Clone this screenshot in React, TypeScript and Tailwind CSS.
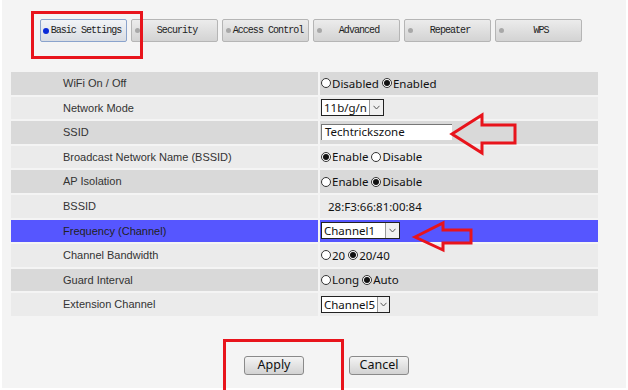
import React from "react"

const tabs = ["Basic Settings", "Security", "Access Control", "Advanced", "Repeater", "WPS"]

function Radio({ checked }: { checked?: boolean }) {
  return (
    <span className="inline-flex w-[10px] h-[10px] rounded-full border border-[#333] bg-white items-center justify-center mr-[1px]">
      {checked && <span className="w-[6px] h-[6px] rounded-full bg-[#111]" />}
    </span>
  )
}

function Select({ value, width }: { value: string; width: string }) {
  return (
    <div className={`flex h-[17px] border border-[#222] bg-white ${width}`}>
      <span className="flex-1 px-[2px] leading-[15px]">{value}</span>
      <span className="w-[14px] border-l border-[#999] bg-[#f0f0f0] flex items-center justify-center">
        <svg width="7" height="5" viewBox="0 0 7 5">
          <path d="M0.5 0.8 L3.5 4 L6.5 0.8" stroke="#555" strokeWidth="1" fill="none" />
        </svg>
      </span>
    </div>
  )
}

type Row = { label: string; value: React.ReactNode; tone: "dark" | "light" | "blue" }

const rows: Row[] = [
  {
    label: "WiFi On / Off",
    tone: "dark",
    value: (
      <span className="flex items-center">
        <Radio />Disabled&nbsp;<Radio checked />Enabled
      </span>
    ),
  },
  { label: "Network Mode", tone: "light", value: <Select value="11b/g/n" width="w-[63px]" /> },
  {
    label: "SSID",
    tone: "dark",
    value: (
      <div className="h-[16px] w-[131px] bg-white border-t border-l border-[#777] border-r-[#ddd] border-b-[#ddd] px-[3px] leading-[14px]">
        Techtrickszone
      </div>
    ),
  },
  {
    label: "Broadcast Network Name (BSSID)",
    tone: "light",
    value: (
      <span className="flex items-center">
        <Radio checked />Enable&nbsp;<Radio />Disable
      </span>
    ),
  },
  {
    label: "AP Isolation",
    tone: "dark",
    value: (
      <span className="flex items-center">
        <Radio />Enable&nbsp;<Radio checked />Disable
      </span>
    ),
  },
  { label: "BSSID", tone: "light", value: <span className="pl-[7px]">28:F3:66:81:00:84</span> },
  { label: "Frequency (Channel)", tone: "blue", value: <Select value="Channel1" width="w-[79px]" /> },
  {
    label: "Channel Bandwidth",
    tone: "light",
    value: (
      <span className="flex items-center">
        <Radio />20&nbsp;<Radio checked />20/40
      </span>
    ),
  },
  {
    label: "Guard Interval",
    tone: "dark",
    value: (
      <span className="flex items-center">
        <Radio />Long&nbsp;<Radio checked />Auto
      </span>
    ),
  },
  { label: "Extension Channel", tone: "light", value: <Select value="Channel5" width="w-[69px]" /> },
]

const toneClass = {
  dark: "bg-[#d9d9d9]",
  light: "bg-[#ebebeb]",
  blue: "bg-[#5656ff]",
}

export default function App() {
  return (
    <div className="w-[628px] h-[390px] bg-white overflow-hidden">
      <div className="relative ml-[2px] w-[624px] h-[388px] bg-[#f4f4f4]">
        <div className="flex gap-[4px] pt-[19px] pl-[38px]">
          {tabs.map((t, i) => (
            <div
              key={t}
              className={`relative w-[87px] h-[23px] rounded-[2px] border flex items-center justify-center pl-[5px] text-[10px] tracking-[-0.95px] text-[#222] ${
                i === 0
                  ? "border-[#8aa3cc] bg-gradient-to-b from-[#f2f4f7] to-[#d9dde3]"
                  : "border-[#b5b5b5] bg-gradient-to-b from-[#ececec] to-[#d3d3d3]"
              }`}
              style={{ fontFamily: '"Liberation Mono", monospace' }}
            >
              <span
                className={`absolute rounded-full ${
                  i === 0 ? "left-[2px] top-[8px] w-[6px] h-[6px] bg-[#0a2ad8]" : "left-[3px] top-[8px] w-[5px] h-[5px] bg-[#a8a8a8]"
                }`}
              />
              <span>{t}</span>
            </div>
          ))}
        </div>

        <div className="mt-[30px] ml-[9px] grid grid-cols-[307px_278px] gap-[2px]">
          {rows.map((r) => (
            <React.Fragment key={r.label}>
              <div
                className={`h-[22.6px] flex items-center pl-[52px] text-[11px] ${toneClass[r.tone]} ${
                  r.tone === "blue" ? "text-[#222]" : "text-[#333]"
                }`}
                style={{ fontFamily: '"Liberation Sans", Arial, sans-serif' }}
              >
                {r.label}
              </div>
              <div
                className={`h-[22.6px] flex items-center pl-[1px] text-[11.5px] text-[#111] ${toneClass[r.tone]}`}
                style={{ fontFamily: '"Noto Sans", sans-serif' }}
              >
                {r.value}
              </div>
            </React.Fragment>
          ))}
        </div>

        <div
          className="flex gap-[45px] pl-[242px] mt-[40px] text-[12.5px] text-[#111]"
          style={{ fontFamily: '"Noto Sans", sans-serif' }}
        >
          <div className="w-[60px] h-[19px] rounded-[3px] border border-[#8a8a8a] bg-gradient-to-b from-[#f4f4f4] to-[#d2d2d2] flex items-center justify-center">
            Apply
          </div>
          <div className="w-[60px] h-[19px] rounded-[3px] border border-[#8a8a8a] bg-gradient-to-b from-[#f4f4f4] to-[#d2d2d2] flex items-center justify-center">
            Cancel
          </div>
        </div>

        <div className="absolute left-[29px] top-[11px] w-[112px] h-[48px] border-[3px] border-[#e8141c] pointer-events-none" />
        <div className="absolute left-[221px] top-[339px] w-[121px] h-[60px] border-[3px] border-[#e8141c] pointer-events-none" />

        <svg className="absolute left-0 top-0 pointer-events-none" width="624" height="388" viewBox="2 0 624 388">
          <polygon
            points="452,134 482,115 482,125 515,125 515,143 482,143 482,153"
            fill="none"
            stroke="#e8141c"
            strokeWidth="3"
            strokeLinejoin="miter"
          />
          <polygon
            points="415,237 443,223 443,230 471,230 471,243 443,243 443,250"
            fill="none"
            stroke="#e8141c"
            strokeWidth="3"
            strokeLinejoin="miter"
          />
        </svg>
      </div>
    </div>
  )
}
